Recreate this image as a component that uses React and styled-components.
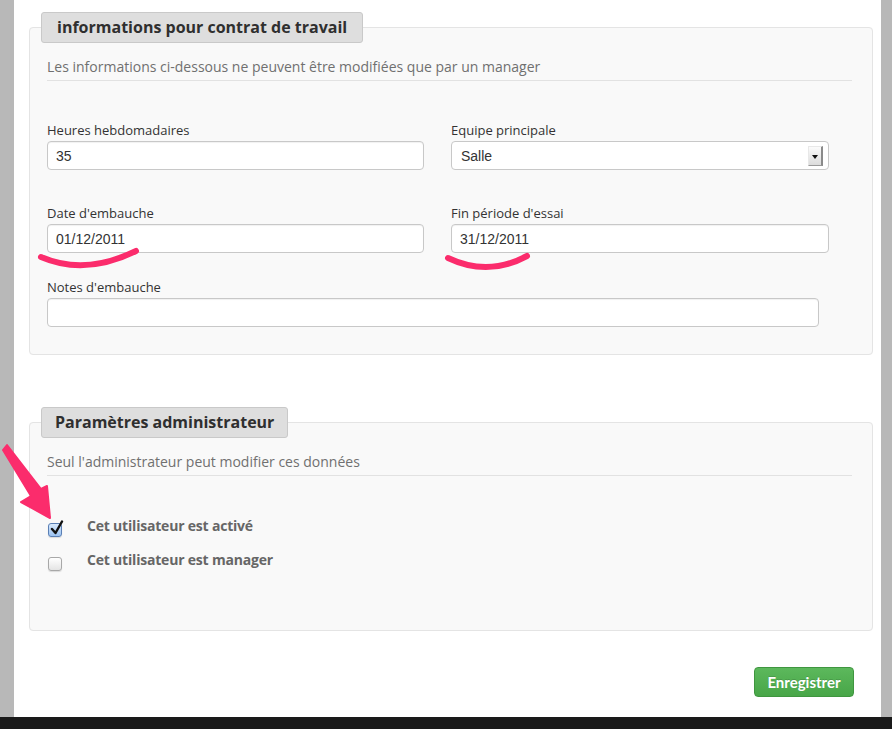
import React from 'react';
import styled, { createGlobalStyle } from 'styled-components';

const GlobalStyle = createGlobalStyle`
  html, body {
    margin: 0;
    padding: 0;
    background: #1a1a1a;
  }
  * {
    box-sizing: border-box;
  }
`;

const Page = styled.div`
  position: relative;
  display: flex;
  flex-direction: column;
  width: 892px;
  height: 729px;
  overflow: hidden;
  font-family: 'Open Sans', 'Liberation Sans', sans-serif;
`;

const Frame = styled.div`
  display: flex;
  height: 717px;
`;

const SideStrip = styled.div`
  width: ${(p) => p.width}px;
  background: #b8b8b8;
  flex-shrink: 0;
`;

const BottomBar = styled.div`
  height: 12px;
  background: #1a1a1a;
`;

const Content = styled.div`
  flex: 1;
  background: #fff;
  padding: 12px 8px 0 15px;
`;

const Fieldset = styled.fieldset`
  margin: ${(p) => p.top || 0}px 0 0 0;
  padding: 0 20px ${(p) => p.bottom}px 17px;
  min-inline-size: 0;
  background: #f9f9f9;
  border: 1px solid #e4e4e4;
  border-radius: 4px;
`;

const Legend = styled.legend`
  margin-left: -6px;
  padding: 0 ${(p) => p.pad || 15}px;
  height: 31px;
  line-height: 29px;
  font-size: 16px;
  font-weight: 700;
  color: #2f2f2f;
  background: #dedede;
  border: 1px solid #c9c9c9;
  border-radius: 3px;
`;

const Description = styled.p`
  margin: 14px 0 0 0;
  padding-bottom: 3px;
  font-size: 14px;
  line-height: 20px;
  color: #707070;
  border-bottom: 1px solid #e2e2e2;
`;

const FieldGrid = styled.div`
  display: grid;
  grid-template-columns: 377px 378px;
  column-gap: 27px;
  margin-top: 40px;
`;

const Field = styled.div`
  display: flex;
  flex-direction: column;
  grid-column: ${(p) => (p.wide ? '1 / -1' : 'auto')};
  margin-bottom: ${(p) => p.after || 0}px;
`;

const Label = styled.label`
  display: block;
  height: 18px;
  margin-bottom: 2px;
  font-size: 13px;
  line-height: 18px;
  color: #333;
`;

const TextInput = styled.input`
  width: ${(p) => (p.wide ? '772px' : '100%')};
  height: 29px;
  padding: 0 8px;
  font-family: 'Liberation Sans', Arial, sans-serif;
  font-size: 14px;
  color: #333;
  background: #fff;
  border: 1px solid #c8c8c8;
  border-radius: 4px;
  box-shadow: inset 0 1px 1px rgba(0, 0, 0, 0.06);
  outline: none;
`;

const SelectBox = styled.div`
  display: flex;
  align-items: center;
  justify-content: space-between;
  height: 29px;
  padding: 0 5px 0 9px;
  font-family: 'Liberation Sans', Arial, sans-serif;
  font-size: 14px;
  color: #333;
  background: #fff;
  border: 1px solid #c8c8c8;
  border-radius: 4px;
`;

const ArrowBox = styled.span`
  display: flex;
  align-items: center;
  justify-content: center;
  width: 15px;
  height: 20px;
  background: linear-gradient(#fbfbfb, #dcdcdc);
  border-right: 2px solid #8a8a8a;
  border-bottom: 1px solid #9a9a9a;
  border-top: 1px solid #e8e8e8;
  border-left: 1px solid #e8e8e8;
`;

const Triangle = styled.span`
  width: 0;
  height: 0;
  margin-top: 2px;
  border-left: 3px solid transparent;
  border-right: 3px solid transparent;
  border-top: 4px solid #111;
`;

const CheckList = styled.div`
  display: flex;
  flex-direction: column;
  gap: 14px;
  margin-top: 40px;
`;

const CheckRow = styled.div`
  display: flex;
  align-items: flex-start;
  height: 20px;
`;

const Box = styled.span`
  position: relative;
  flex-shrink: 0;
  width: 14px;
  height: 14px;
  margin: 7px 0 0 1px;
  border-radius: 3px;
  border: 1px solid ${(p) => (p.checked ? '#5a7fb5' : '#a8a8a8')};
  background: ${(p) =>
    p.checked
      ? 'linear-gradient(#d8e9fc, #9cc3f2)'
      : 'linear-gradient(#ffffff, #e4e4e4)'};
  box-shadow: 0 1px 1px rgba(0, 0, 0, 0.12);
`;

const Tick = styled.svg`
  position: absolute;
  left: 1px;
  top: -4px;
`;

const CheckLabel = styled.span`
  margin-left: 25px;
  font-size: 14px;
  font-weight: 700;
  line-height: 20px;
  letter-spacing: -0.2px;
  color: #666;
`;

const Footer = styled.div`
  display: flex;
  justify-content: flex-end;
  margin-top: 36px;
  padding-right: 19px;
`;

const SaveButton = styled.button`
  width: 100px;
  height: 30px;
  font-family: Lato, 'Open Sans', sans-serif;
  font-size: 15px;
  font-weight: 700;
  color: #fff;
  background: linear-gradient(#5cb85c, #48a648);
  border: 1px solid #3f963f;
  border-radius: 4px;
  text-shadow: 0 -1px 0 rgba(0, 0, 0, 0.15);
`;

const Annotations = styled.svg`
  position: absolute;
  left: 0;
  top: 0;
  pointer-events: none;
`;

const Checkbox = ({ checked, children }) => (
  <CheckRow>
    <Box checked={checked}>
      {checked && (
        <Tick width="14" height="16" viewBox="0 0 14 16">
          <path d="M2 9 L5.5 13 L12 1.5" fill="none" stroke="#111" strokeWidth="2.4" strokeLinecap="round" strokeLinejoin="round" />
        </Tick>
      )}
    </Box>
    <CheckLabel>{children}</CheckLabel>
  </CheckRow>
);

const App = () => (
  <>
    <GlobalStyle />
    <Page>
      <Frame>
        <SideStrip width={14} />
        <Content>
          <Fieldset bottom={27}>
            <Legend>informations pour contrat de travail</Legend>
            <Description>Les informations ci-dessous ne peuvent être modifiées que par un manager</Description>
            <FieldGrid>
              <Field after={34}>
                <Label>Heures hebdomadaires</Label>
                <TextInput defaultValue="35" />
              </Field>
              <Field after={34}>
                <Label>Equipe principale</Label>
                <SelectBox>
                  <span>Salle</span>
                  <ArrowBox>
                    <Triangle />
                  </ArrowBox>
                </SelectBox>
              </Field>
              <Field after={25}>
                <Label>Date d'embauche</Label>
                <TextInput defaultValue="01/12/2011" />
              </Field>
              <Field after={25}>
                <Label>Fin période d'essai</Label>
                <TextInput defaultValue="31/12/2011" />
              </Field>
              <Field wide>
                <Label>Notes d'embauche</Label>
                <TextInput wide defaultValue="" />
              </Field>
            </FieldGrid>
          </Fieldset>

          <Fieldset top={52} bottom={60}>
            <Legend pad={13}>Paramètres administrateur</Legend>
            <Description>Seul l'administrateur peut modifier ces données</Description>
            <CheckList>
              <Checkbox checked>Cet utilisateur est activé</Checkbox>
              <Checkbox>Cet utilisateur est manager</Checkbox>
            </CheckList>
          </Fieldset>

          <Footer>
            <SaveButton>Enregistrer</SaveButton>
          </Footer>
        </Content>
        <SideStrip width={11} />
      </Frame>
      <BottomBar />

      <Annotations width="892" height="729" viewBox="0 0 892 729">
        <g fill="none" stroke="#fb2c6c" strokeWidth="6" strokeLinecap="round">
          <path d="M41 257 Q 85 276 136 251" />
          <path d="M448 258 Q 488 277 527 256" />
        </g>
        <polygon
          points="3,450 7,445 41,489 47,486 50,518 21,502 31,496"
          fill="#fb2c6c"
          stroke="#fb2c6c"
          strokeWidth="2"
          strokeLinejoin="round"
        />
      </Annotations>
    </Page>
  </>
);

export default App;
